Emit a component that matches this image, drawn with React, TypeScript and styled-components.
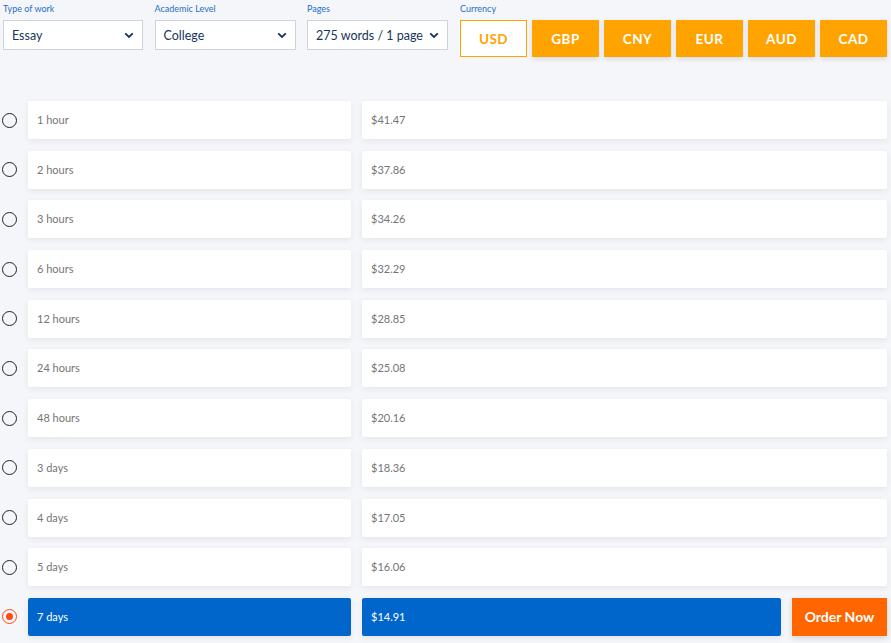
import React, { useState } from "react"
import styled, { createGlobalStyle } from "styled-components"

const GlobalStyle = createGlobalStyle`
    html, body {
        margin: 0;
        padding: 0;
        background: #f4f6f9;
        font-family: Lato, "Open Sans", sans-serif;
    }
`

const deadlines = [
    { label: "1 hour", price: "$41.47" },
    { label: "2 hours", price: "$37.86" },
    { label: "3 hours", price: "$34.26" },
    { label: "6 hours", price: "$32.29" },
    { label: "12 hours", price: "$28.85" },
    { label: "24 hours", price: "$25.08" },
    { label: "48 hours", price: "$20.16" },
    { label: "3 days", price: "$18.36" },
    { label: "4 days", price: "$17.05" },
    { label: "5 days", price: "$16.06" },
    { label: "7 days", price: "$14.91" },
]

const currencies = ["USD", "GBP", "CNY", "EUR", "AUD", "CAD"]

const Chevron = () => (
    <svg width="10" height="7" viewBox="0 0 10 7">
        <path d="M1.2 1.3 L5 5 L8.8 1.3" fill="none" stroke="#16365a" strokeWidth="1.8" />
    </svg>
)

const Dropdown = ({ label, value, width }: { label: string, value: string, width: number }) => (
    <Field>
        <FieldLabel>{label}</FieldLabel>
        <SelectBox $width={width}>
            <span>{value}</span>
            <Chevron />
        </SelectBox>
    </Field>
)

export default function App() {
    const [currency, setCurrency] = useState("USD")
    const [selected, setSelected] = useState(10)

    return <Page>
        <GlobalStyle />
        <Toolbar>
            <Dropdown label="Type of work" value="Essay" width={140} />
            <Dropdown label="Academic Level" value="College" width={141} />
            <Dropdown label="Pages" value="275 words / 1 page" width={141} />
            <CurrencyField>
                <FieldLabel>Currency</FieldLabel>
                <CurrencyRow>
                    {currencies.map(c => (
                        <CurrencyButton key={c} $active={c === currency} onClick={() => setCurrency(c)}>{c}</CurrencyButton>
                    ))}
                </CurrencyRow>
            </CurrencyField>
        </Toolbar>
        <Table>
            {deadlines.map((d, i) => {
                const active = i === selected
                return <Row key={d.label} onClick={() => setSelected(i)}>
                    <RadioSlot>
                        <Radio $checked={active} />
                    </RadioSlot>
                    <DeadlineCell $active={active}>{d.label}</DeadlineCell>
                    <PriceCell $active={active}>{d.price}</PriceCell>
                    {active && <OrderButton>Order Now</OrderButton>}
                </Row>
            })}
        </Table>
    </Page>
}

const Page = styled.div`
    width: 891px;
    height: 643px;
    overflow: hidden;
    padding: 0 4px 0 0;
    box-sizing: border-box;
`

const Toolbar = styled.div`
    display: flex;
    align-items: flex-start;
    gap: 11.5px;
    padding: 3px 0 0 3px;
`

const Field = styled.div`
    display: flex;
    flex-direction: column;
`

const CurrencyField = styled(Field)`
    margin-left: 0.5px;
`

const FieldLabel = styled.div`
    font-size: 9px;
    line-height: 11px;
    color: #1f6fc4;
    height: 17px;
`

const SelectBox = styled.div<{ $width: number }>`
    width: ${({ $width }) => $width}px;
    height: 30px;
    box-sizing: border-box;
    background: #fff;
    border: 1px solid #cdd3dc;
    display: flex;
    align-items: center;
    justify-content: space-between;
    padding: 0 8px;
    font-size: 12.5px;
    color: #16365a;
`

const CurrencyRow = styled.div`
    display: flex;
    gap: 5px;
`

const CurrencyButton = styled.button<{ $active: boolean }>`
    width: 67px;
    height: 37px;
    box-sizing: border-box;
    border: 1px solid #ffa300;
    background: ${({ $active }) => $active ? "#fff" : "#ffa300"};
    color: ${({ $active }) => $active ? "#ffa300" : "#fff"};
    font-family: Lato, "Open Sans", sans-serif;
    font-size: 13.5px;
    font-weight: 700;
    letter-spacing: 0.5px;
    box-shadow: ${({ $active }) => $active ? "none" : "0 2px 5px rgba(0, 0, 0, 0.12)"};
    cursor: pointer;
    padding: 0;
`

const Table = styled.div`
    display: flex;
    flex-direction: column;
    gap: 11.7px;
    margin-top: 44px;
`

const Row = styled.div`
    display: flex;
    align-items: center;
    height: 38px;
`

const RadioSlot = styled.div`
    width: 28px;
    flex-shrink: 0;
    display: flex;
    align-items: center;
`

const Radio = styled.div<{ $checked: boolean }>`
    width: 15px;
    height: 15px;
    margin-left: 2px;
    border-radius: 50%;
    box-sizing: border-box;
    border: 1.3px solid ${({ $checked }) => $checked ? "#ff4a12" : "#222"};
    display: flex;
    align-items: center;
    justify-content: center;
    &::after {
        content: "";
        width: 7px;
        height: 7px;
        border-radius: 50%;
        background: #ff4a12;
        display: ${({ $checked }) => $checked ? "block" : "none"};
    }
`

const Cell = styled.div<{ $active: boolean }>`
    height: 38px;
    box-sizing: border-box;
    display: flex;
    align-items: center;
    padding: 0 0 1px 9px;
    border-radius: 2px;
    font-size: 11px;
    color: ${({ $active }) => $active ? "#fff" : "#757575"};
    background: ${({ $active }) => $active ? "#0066cc" : "#fff"};
    box-shadow: 0 2px 6px rgba(0, 0, 0, 0.07);
`

const DeadlineCell = styled(Cell)`
    width: 323px;
    flex-shrink: 0;
`

const PriceCell = styled(Cell)`
    flex: 1;
    margin-left: 11px;
`

const OrderButton = styled.button`
    width: 95px;
    height: 38px;
    margin-left: 11px;
    flex-shrink: 0;
    border: none;
    background: #ff6600;
    color: #fff;
    font-family: Lato, "Open Sans", sans-serif;
    font-size: 14px;
    font-weight: 700;
    box-shadow: 0 2px 6px rgba(0, 0, 0, 0.15);
    cursor: pointer;
    padding: 0;
`
